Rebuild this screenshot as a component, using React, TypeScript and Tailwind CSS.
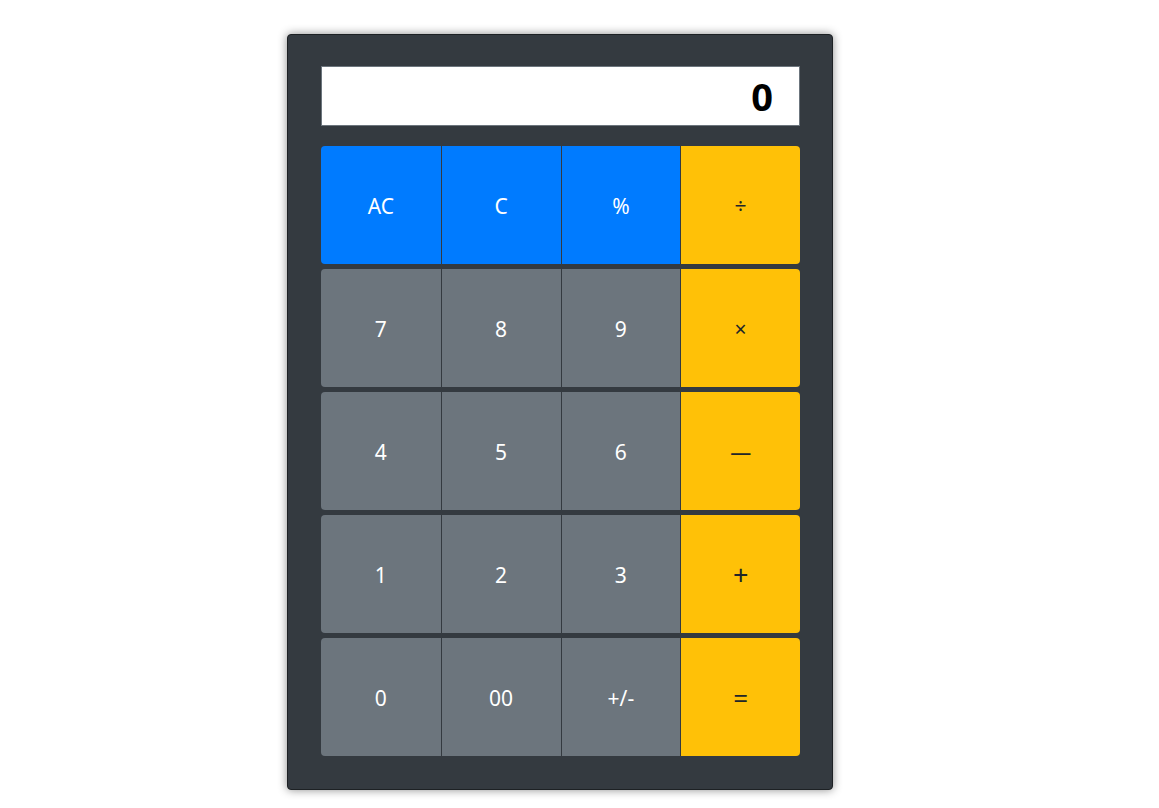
const rows: { label: string; kind: "blue" | "gray" | "yellow"; size?: string }[][] = [
  [
    { label: "AC", kind: "blue" },
    { label: "C", kind: "blue" },
    { label: "%", kind: "blue" },
    { label: "÷", kind: "yellow" },
  ],
  [
    { label: "7", kind: "gray" },
    { label: "8", kind: "gray" },
    { label: "9", kind: "gray" },
    { label: "×", kind: "yellow" },
  ],
  [
    { label: "4", kind: "gray" },
    { label: "5", kind: "gray" },
    { label: "6", kind: "gray" },
    { label: "—", kind: "yellow" },
  ],
  [
    { label: "1", kind: "gray" },
    { label: "2", kind: "gray" },
    { label: "3", kind: "gray" },
    { label: "+", kind: "yellow", size: "text-[27px]" },
  ],
  [
    { label: "0", kind: "gray" },
    { label: "00", kind: "gray" },
    { label: "+/-", kind: "gray" },
    { label: "=", kind: "yellow", size: "text-[26px]" },
  ],
];

const kindClass = {
  blue: "bg-[#007bff] text-white",
  gray: "bg-[#6c757d] text-white",
  yellow: "bg-[#ffc107] text-[#212529]",
};

export default function App() {
  return (
    <div
      className="min-h-[808px] bg-white pt-[34px] pl-[287px]"
      style={{ fontFamily: '"Noto Sans", "Open Sans", sans-serif' }}
    >
      <div className="flex w-[546px] flex-col rounded border border-[#1d2124] bg-[#343a40] pl-[33px] pr-[32px] pt-[31px] pb-[33px] shadow-[0_0_10px_rgba(0,0,0,0.45)]">
        <div className="flex h-[60px] items-center justify-end border border-[#6c757d] bg-white pr-[26px]">
          <span className="text-[38px] font-bold leading-none text-black">0</span>
        </div>

        <div className="mt-[20px] flex flex-col gap-[5px]">
          {rows.map((row, i) => (
            <div key={i} className="grid h-[118px] grid-cols-4 overflow-hidden rounded">
              {row.map((b, j) => (
                <button
                  key={b.label}
                  className={`flex items-center justify-center pt-[3px] ${b.size ?? "text-[21px]"} ${
                    kindClass[b.kind]
                  } ${j > 0 ? "border-l border-[#343a40]" : ""}`}
                >
                  {b.label}
                </button>
              ))}
            </div>
          ))}
        </div>
      </div>
    </div>
  );
}
